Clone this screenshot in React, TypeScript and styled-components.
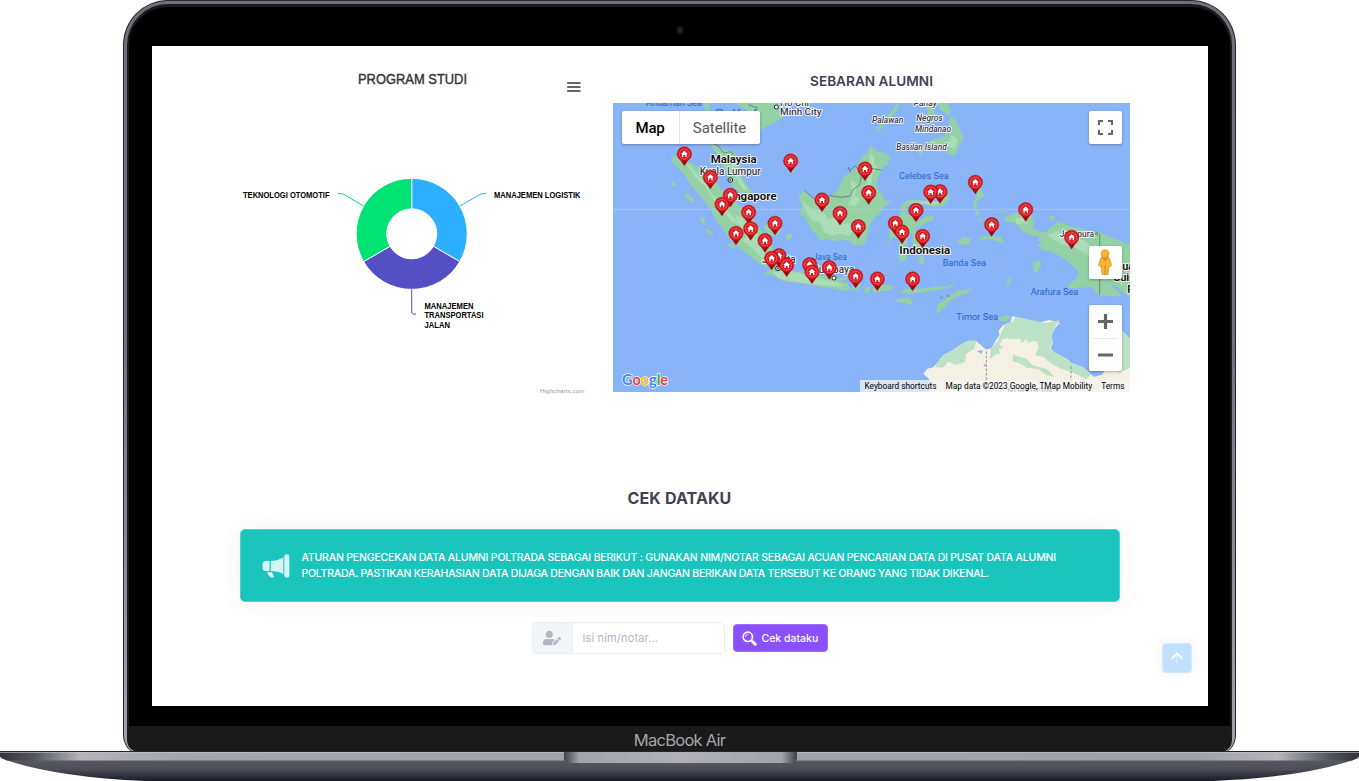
import React from "react";
import styled, { createGlobalStyle } from "styled-components";
import { FaUserEdit } from "react-icons/fa";

const Global = createGlobalStyle`
  * { box-sizing: border-box; }
  body { margin: 0; background: #fff; overflow: hidden; }
`;

const Page = styled.div`
  width: 1359px;
  height: 781px;
  display: flex;
  flex-direction: column;
  align-items: center;
  font-family: Inter, "Open Sans", sans-serif;
`;

const Lid = styled.div`
  width: 1113px;
  height: 752px;
  flex: none;
  padding: 1px 1px 0;
  background: #25262e;
  border-radius: 45px 45px 12px 12px / 45px 45px 18px 18px;
`;
const Rim = styled.div`
  height: 751px;
  padding: 3px 3px 0;
  border-radius: 44px 44px 12px 12px / 44px 44px 18px 18px;
  background: linear-gradient(#6f7079, #70717a 45%, #a2a3ab);
`;
const Bezel = styled.div`
  height: 748px;
  display: flex;
  flex-direction: column;
  align-items: center;
  background: #000;
  border: 2px solid #1b1b1d;
  border-bottom: 0;
  border-top-width: 3px;
  border-radius: 41px 41px 12px 12px;
  overflow: hidden;
`;
const CameraStrip = styled.div`
  height: 39px;
  flex: none;
  padding-top: 19px;
`;
const Camera = styled.div`
  width: 8px;
  height: 8px;
  border-radius: 50%;
  background: #2b2b2e;
  border: 2px solid #151517;
`;
const Screen = styled.main`
  width: 1056px;
  height: 660px;
  flex: none;
  background: #fff;
  overflow: hidden;
`;
const Chin = styled.div`
  width: 1104px;
  height: 26px;
  flex: none;
  margin-top: 20px;
  background: #1a1a1a;
  border-radius: 0 0 11px 11px;
  color: #a5a5a9;
  font: 400 16.5px/28px Inter, sans-serif;
  letter-spacing: -0.75px;
  text-align: center;
`;
const Base = styled.svg`
  width: 1359px;
  height: 30px;
  flex: none;
  display: block;
  margin-top: -1px;
`;

const Charts = styled.section`
  display: grid;
  grid-template-columns: 358px 517px;
  column-gap: 15px;
  padding: 24px 0 0 88px;
  height: 346px;
`;
const ChartSvg = styled.svg`
  width: 358px;
  height: 328px;
  display: block;
  font-family: "Liberation Sans", Arial, sans-serif;
`;
const MapColumn = styled.div`
  display: flex;
  flex-direction: column;
`;
const MapTitle = styled.h2`
  height: 33px;
  margin: 0;
  padding-left: 1px;
  color: #3f4254;
  font: 600 13.6px/23px Inter, sans-serif;
  text-align: center;
  letter-spacing: 0.02px;
`;
const MapBox = styled.div`
  position: relative;
  width: 517px;
  height: 289px;
  font-family: Roboto, Arial, sans-serif;
`;
const MapSvg = styled.svg`
  width: 517px;
  height: 289px;
  display: block;
`;
const MapTypes = styled.div`
  position: absolute;
  left: 9px;
  top: 8px;
  display: flex;
  height: 33px;
  background: #fff;
  border-radius: 2px;
  box-shadow: 0 1px 3px rgba(0, 0, 0, 0.3);
`;
const MapType = styled.button<{ $active?: boolean }>`
  width: ${(p) => (p.$active ? 57 : 81)}px;
  border: 0;
  border-left: ${(p) => (p.$active ? 0 : 1)}px solid #e4e4e4;
  padding: 0;
  background: none;
  color: ${(p) => (p.$active ? "#000" : "#565656")};
  font: ${(p) => (p.$active ? 500 : 400)} 15px/34px Roboto, sans-serif;
  letter-spacing: ${(p) => (p.$active ? -0.2 : -0.05)}px;
`;
const MapControl = styled.button<{ $top: number; $tall?: boolean }>`
  position: absolute;
  right: 8px;
  top: ${(p) => p.$top}px;
  width: 33px;
  height: ${(p) => (p.$tall ? 66 : 33)}px;
  padding: 0;
  border: 0;
  border-radius: 2px;
  background: #fff;
  box-shadow: 0 1px 3px rgba(0, 0, 0, 0.3);
  svg { display: block; }
`;
const Attribution = styled.div`
  position: absolute;
  right: 0;
  bottom: 0;
  width: 270px;
  height: 12px;
  display: flex;
  justify-content: space-between;
  padding: 0 5px 0 5px;
  background: rgba(245, 245, 245, 0.75);
  color: #000;
  font: 400 8.3px/13px Roboto, sans-serif;
  white-space: nowrap;
`;

const Check = styled.section`
  display: flex;
  flex-direction: column;
  align-items: center;
  padding-top: 95px;
`;
const CheckTitle = styled.h1`
  margin: 0 0 20px;
  color: #3f4254;
  font: 700 16px/22px Inter, sans-serif;
  letter-spacing: 0.12px;
`;
const Notice = styled.div`
  width: 880px;
  height: 73px;
  display: flex;
  align-items: center;
  gap: 12px;
  padding: 0 21px;
  color: #fff;
  background: #1bc5bd;
  border: 1px solid #4bd3cd;
  border-radius: 5px;
  box-shadow: 0 0 25px rgba(82, 63, 105, 0.07);
  > svg { flex: none; opacity: 0.82; }
`;
const NoticeText = styled.p`
  margin: 0;
  font: 500 10.5px/16px Inter, sans-serif;
  white-space: nowrap;
`;
const NoticeLine = styled.span<{ $spacing: number }>`
  display: block;
  letter-spacing: ${(p) => p.$spacing}px;
`;
const Form = styled.div`
  display: flex;
  align-items: center;
  gap: 8px;
  margin-top: 20px;
`;
const InputGroup = styled.div`
  display: flex;
  width: 193px;
  height: 32px;
  border: 1px solid #ebedf3;
  border-radius: 4px;
  overflow: hidden;
`;
const Addon = styled.span`
  width: 40px;
  flex: none;
  display: flex;
  align-items: center;
  justify-content: center;
  background: #f3f6f9;
  border-right: 1px solid #ebedf3;
  color: #b5b5c3;
`;
const Input = styled.input`
  min-width: 0;
  flex: 1;
  border: 0;
  padding: 0 10px;
  font: 400 11px Inter, sans-serif;
  letter-spacing: 0.15px;
  &::placeholder { color: #b5b5c3; }
`;
const Submit = styled.button`
  width: 95px;
  height: 28px;
  display: flex;
  align-items: center;
  gap: 5px;
  padding: 0 8px;
  border: 1px solid #9f6dff;
  border-radius: 4px;
  background: #8950fc;
  color: #fff;
  font: 500 10.5px Inter, sans-serif;
  letter-spacing: 0;
  white-space: nowrap;
  svg { flex: none; }
`;
const ScrollRow = styled.div`
  display: flex;
  justify-content: flex-end;
  margin-top: -11px;
  padding-right: 16px;
`;
const ScrollTop = styled.button`
  width: 30px;
  height: 30px;
  padding: 0;
  border: 1px solid #d4e9ff;
  border-radius: 4px;
  background: #c1e0ff;
  box-shadow: 0 0 14px rgba(82, 63, 105, 0.07);
  svg { display: block; }
`;

const pins: [number, number][] = [
  [223, 162], [542, 183], [765, 207], [301, 232], [1096, 247], [990, 275], [962, 276], [776, 278],
  [361, 286], [636, 300], [336, 313], [1247, 329], [918, 331], [416, 337], [690, 340], [495, 370],
  [856, 370], [1145, 374], [745, 380], [422, 386], [876, 396], [378, 400], [938, 409], [1385, 412],
  [465, 422], [507, 467], [485, 475], [599, 494], [530, 495], [658, 503], [606, 516], [737, 529],
  [802, 537], [908, 537],
];

function Pin({ x, y }: { x: number; y: number }) {
  return (
    <g transform={`translate(${x} ${y})`}>
      <path d="M-17 11 L0 36 L17 11Z" fill="#9c0d12" />
      <circle r="21.5" fill="#d5151c" stroke="#b80d13" strokeWidth="1.5" />
      <circle r="15.5" fill="#dc1c22" stroke="#ee8083" strokeWidth="1.8" />
      <path d="M0 -10 L10 0 H7 V9 H3 V3 H-3 V9 H-7 V0 H-10Z" fill="#fff" />
    </g>
  );
}

type LabelProps = {
  x: number; y: number; w: number; size: number; kind?: "sea" | "isle" | "city" | "bold"; children: string;
};
function Label({ x, y, w, size, kind = "bold", children }: LabelProps) {
  const sea = kind === "sea";
  return (
    <text
      x={x} y={y} textLength={w} fontSize={size} lengthAdjust="spacingAndGlyphs"
      fontStyle={kind === "isle" ? "italic" : "normal"}
      fontWeight={kind === "bold" ? 700 : sea ? 400 : 500}
      fill={sea ? "#2563c9" : kind === "bold" ? "#151515" : "#3a3a4a"}
      stroke={sea ? "none" : "#fff"} strokeWidth={sea ? 0 : 5}
      strokeLinejoin="round" paintOrder="stroke"
    >
      {children}
    </text>
  );
}

function AlumniMap() {
  return (
    <MapSvg viewBox="9 9 1551 867">
      <rect x="9" y="9" width="1551" height="867" fill="#8ab4f8" />
      <g fill="#94d2a5">
        <path d="M182 172 L205 168 225 176 250 194 270 205 286 226 315 245 338 272 360 290 391 320 417 345 436 365 446 382 468 402 487 425 488 458 482 493 468 500 446 490 425 472 399 453 376 434 354 410 337 384 315 355 303 330 283 303 261 276 239 252 225 224 200 200 187 184Z" />
        <path d="M284 9 H295 L301 31 292 49 300 85 298 110 318 137 346 149 372 156 386 175 390 218 402 242 422 269 434 286 427 296 405 287 380 270 359 246 346 212 331 184 316 155 302 135 284 121 278 82 286 40Z" />
        <path d="M378 9 H505 L522 26 535 45 515 53 492 69 470 78 451 93 443 112 430 104 443 85 447 66 425 50 409 29 391 20Z" />
        <path d="M565 289 L583 271 603 292 634 303 660 291 684 270 700 230 718 220 740 201 754 174 774 157 780 136 798 154 823 159 844 171 830 182 840 192 820 198 807 226 798 259 813 278 824 301 845 305 823 318 812 340 796 352 782 369 774 399 764 431 734 438 720 423 697 420 671 424 651 417 631 420 618 404 599 381 589 356 570 345 575 318Z" />
        <path d="M870 351 L873 318 891 301 925 299 949 302 992 303 1008 290 1022 281 1016 301 1000 318 969 320 933 310 905 310 887 320 892 343 907 349 928 362 950 348 974 349 970 359 952 367 929 381 912 386 928 410 942 427 955 455 945 463 932 451 923 464 909 435 908 404 899 397 893 417 890 440 888 480 870 486 864 464 872 446 865 415 850 410 841 423 836 405 847 385 856 370Z" />
        <path d="M1100 294 L1100 276 1114 263 1117 277 1126 288 1115 294 1098 307 1101 326 1111 345 1100 347 1093 327 1090 305Z M1064 212 l5 -8 2 10 -5 1Z M1032 225l8 5-4 2Z M1107 355l14 7-2 5-12-6Z" />
        <path d="M800 90 L813 66 831 48 850 26 860 9 867 14 861 31 846 49 827 70 814 88Z M981 9 H1011 L1024 31 1014 48 1001 33 991 30Z M1020 47 L1039 63 1049 89 1059 105 1060 119 1053 125 1045 144 1036 165 1020 166 1007 157 1020 142 1001 131 983 145 958 151 934 150 946 135 964 119 991 115 1009 101 1030 93 1018 77Z M953 9 H978 L968 23 979 52 962 75 952 55Z M925 153l15 4-13 7Z M900 182l12-4-5 8Z" />
        <path d="M1160 333 L1193 332 1190 337 1169 338Z M1179 354 L1208 341 1229 338 1260 343 1271 360 1269 384 1290 395 1307 397 1320 383 1340 370 1362 371 1390 381 1433 391 1468 398 1506 414 1560 435 V590 L1541 579 1519 559 1501 551 1524 574 1535 588 1502 588 1466 586 1443 561 1412 563 1377 565 1375 551 1393 542 1408 520 1390 499 1364 476 1334 460 1297 449 1280 434 1298 429 1285 420 1287 408 1261 405 1236 392 1216 368 1190 366Z" />
        <path d="M1102 421 L1121 407 1148 409 1175 412 1183 432 1161 423 1128 417Z M1044 423l19-13 20 8-6 13-25 5Z M1269 488l21-7 3 18-12 20-10-5Z M1190 545l12-14 3 5-8 20-8-1Z M1312 345l20 4 2 10-12 2Z M1340 365l17 2-5 8-12-2Z" />
        <path d="M462 521 L481 508 482 490 493 505 516 510 560 513 610 526 669 526 685 542 714 550 720 573 680 568 638 562 603 554 560 548 517 544 500 529Z M727 562l23-10 4 7-17 13-13-3Z M674 536l31-4 8 6-31 6Z M763 567l13-9 7 4-7 17-13-1Z M786 571l13-13 38-4 17 8-22 12-17-2-26 7Z M870 578l19-13 38 2 45-6 30-3-3 10-59 7-38 6Z M1003 560l27-7-4 8-21 5Z M852 600l43-9 15 16-7 9-22-8-25-5Z M978 640l6-27 35-25 26-17 38-5-10 12-29 10-24 16-22 23-18 14Z" />
        <path d="M460 382l18-20 17 8 20 13-6 16-12 8-23-6Z M528 407l14-8 4 14-10 8-9-6Z M180 248l14-1 4 13-12-3Z M220 287l14-9 21 26-10 4Z M270 351l12 2 4 22-10-4Z M282 383l18 8 10 15-13-2Z M343 430l25 2 11 15-13-3Z M542 205l10 7-4 14Z M830 425l8 2-2 12Z M927 470l10-3 7 20-7 8-8-4Z" />
      </g>
      <g fill="#b0dfbc" opacity=".8">
        <path d="M225 190l15 6 20 25 25 24 15 28 35 42 35 34 15 22-18-4-23-27-31-36-26-42-32-30-19-31Z" />
        <path d="M374 344l23 9 24 32 33 31 17 43-14 18-24-28-31-24-18-20 21 11 7-16-24-21Z" />
        <path d="M576 305l31 20 29 5 18 27 28-6 7 24 26-6 19 14-16 26-28-8-25 7-22-12-14-29-22-6-18-26Z" />
        <path d="M782 160l12 10-2 25 11 5-16 22-4 35-15 25-15-12 19-23-5-22-15-8 22-14Z M722 239l18 12-5 35 17 14-17 20-21-6 15-27Z" />
        <path d="M353 162l24 14-3 35 23 32 17 33-15-8-21-33-13-21-2-30Z M1022 103l21 13-9 31-26-10 12-16Z" />
        <path d="M1215 354l32 1 6 15-33 2Z M1308 405l38-12 27 24 47 2 36 33 40 14 40 2v89l-27-28-38-15-17-34-28-20-40-22-28-3Z M897 305l70-3 31 4-26 8-65-6Z M488 517l30-3 53 5 40 13 70 14 22 13-22 1-77-7-64-10-38-10Z" />
      </g>
      <path d="M940 822 L952 806 969 802 985 785 1000 765 1024 753 1050 736 1072 724 1098 723 1113 736 1128 749 1144 745 1158 721 1169 704 1165 693 1180 675 1201 667 1207 648 1230 654 1264 662 1290 667 1318 660 1350 669 1333 686 1324 711 1329 728 1322 745 1334 759 1371 777 1394 799 1426 807 1451 830 1477 824 1489 800 1514 746 1532 690 1544 700 1547 733 1560 744 V876 H958 L968 853 955 835Z" fill="#f5f0e4" />
      <g fill="#bbe2c6">
        <path d="M976 802l12-25 18-15 27-12 24-20 23-9 20 1-8 25-24 15-3 23-27 10-24-10-15 18Z" />
        <path d="M1142 747l22-25 10-26 12-23 22-8 9-15 46 10 44 9 43-9-19 26-7 27 5 15-11 16 14 12 23 12 29 20 36 14 23 22-15 13-38-19-40-13-30-17-21-18-24-4 10-22-3-18-15-3-14 7-2-13-17 12-3-12-24 1-16-3-15 4-7 16 12 9-15 2 5 15-17 5-15 12Z M1210 764l38 12 20 20 42 11 23 23-25-5-24-19-32-2-20-13-24-8Z M1492 805l29-60 15-54 24 24v89l-31 13-22-10Z" />
      </g>
      <path d="M1100 753l19-2-4 10Z M1120 799l6-10 2 10Z M1336 722l9 1 2 14-9-1Z" fill="#8ab4f8" />
      <path d="M1164 655l23-9 16 2-12 15-18 1Z" fill="#94d2a5" />
      <g fill="none" stroke="#5f7468" strokeWidth="2.3">
        <path d="M583 271 L620 303 642 307 660 286 690 292 718 289 731 267 748 255 754 232 747 212 735 197 721 211 714 201 722 217M782 205l33 5M306 130l19 8 17 22 18-5 12 8M1469 402v183M415 14l29 10M990 590l8 5M1010 587l10 2" />
        <path d="M1129 754V876M1383 800V876" stroke="#777" strokeDasharray="8 5" />
      </g>
      <path d="M9 328H1560" stroke="#a9c7fa" strokeWidth="2.5" />
      <Label x={108} y={18} w={168} size={26} kind="sea">Andaman Sea</Label>
      <Label x={313} y={48} w={130} size={26} kind="sea">Gulf of</Label>
      <Label x={510} y={18} w={87} size={28} kind="city">Ho Chi</Label>
      <Label x={510} y={46} w={125} size={29} kind="city">Minh City</Label>
      <Label x={302} y={188} w={138} size={34}>Malaysia</Label>
      <Label x={269} y={224} w={183} size={30} kind="city">Kuala Lumpur</Label>
      <Label x={342} y={300} w={158} size={34}>Singapore</Label>
      <Label x={911} y={17} w={70} size={25} kind="isle">Panay</Label>
      <Label x={786} y={69} w={94} size={26} kind="isle">Palawan</Label>
      <Label x={919} y={62} w={79} size={26} kind="isle">Negros</Label>
      <Label x={915} y={96} w={108} size={26} kind="isle">Mindanao</Label>
      <Label x={859} y={151} w={151} size={26} kind="isle">Basilan Island</Label>
      <Label x={867} y={236} w={149} size={28} kind="sea">Celebes Sea</Label>
      <Label x={1349} y={410} w={103} size={26} kind="city">Jayapura</Label>
      <Label x={868} y={462} w={153} size={34}>Indonesia</Label>
      <Label x={608} y={480} w={103} size={28} kind="sea">Java Sea</Label>
      <Label x={456} y={490} w={101} size={30} kind="city">Jakarta</Label>
      <Label x={608} y={520} w={125} size={30} kind="city">Surabaya</Label>
      <Label x={998} y={498} w={130} size={28} kind="sea">Banda Sea</Label>
      <Label x={1262} y={584} w={143} size={28} kind="sea">Arafura Sea</Label>
      <Label x={1039} y={659} w={125} size={28} kind="sea">Timor Sea</Label>
      <Label x={1480} y={511} w={92} size={34}>Papua</Label>
      <Label x={1508} y={543} w={104} size={34}>Guinea</Label>
      <Label x={1552} y={578} w={60} size={30}>Port</Label>
      <Label x={1192} y={880} w={135} size={22} kind="city">NORTHERN</Label>
      <g fill="#fff" stroke="#222" strokeWidth="3">
        <circle cx="499" cy="21" r="6" />
        <circle cx="361" cy="240" r="7" /><circle cx="361" cy="240" r="2" />
        <circle cx="504" cy="505" r="7" /><circle cx="504" cy="505" r="2" />
        <circle cx="672" cy="534" r="6" /><circle cx="1460" cy="401" r="3" strokeWidth="2" />
      </g>
      {pins.map(([x, y]) => <Pin key={`${x}-${y}`} x={x} y={y} />)}
      <text x="36" y="855" fontSize="46" fontWeight="700" textLength="138" lengthAdjust="spacingAndGlyphs" fontFamily="Lato, sans-serif" stroke="#fff" strokeWidth="4" paintOrder="stroke">
        <tspan fill="#4285f4">G</tspan><tspan fill="#ea4335">o</tspan><tspan fill="#fbbc05">o</tspan><tspan fill="#4285f4">g</tspan><tspan fill="#34a853">l</tspan><tspan fill="#ea4335">e</tspan>
      </text>
    </MapSvg>
  );
}

function ProgramChart() {
  return (
    <ChartSvg viewBox="240 70 358 328">
      <text x="358" y="84" fontSize="14.4" fill="#333" stroke="#333" strokeWidth=".4" textLength="109" lengthAdjust="spacingAndGlyphs">PROGRAM STUDI</text>
      <path d="M568 83H579.7M568 87H579.7M568 91H579.7" stroke="#666" strokeWidth="2.2" strokeLinecap="round" />
      <g stroke="#fff" strokeLinejoin="round">
        <path d="M411.7 178.3 A55.5 55.5 0 0 1 459.8 261.6 L433.4 246.3 A25 25 0 0 0 411.7 208.8Z" fill="#2caffe" />
        <path d="M459.8 261.6 A55.5 55.5 0 0 1 363.6 261.6 L390 246.3 A25 25 0 0 0 433.4 246.3Z" fill="#544fc5" />
        <path d="M363.6 261.6 A55.5 55.5 0 0 1 411.7 178.3 L411.7 208.8 A25 25 0 0 0 390 246.3Z" fill="#00e272" />
      </g>
      <g fill="none" strokeWidth="1">
        <path d="M460 206 L480 194.5 Q482 193.5 486 193.5" stroke="#2caffe" />
        <path d="M363.5 206 L344 194.5 Q342 193.5 338 193.5" stroke="#00e272" />
        <path d="M411.7 289.5 V313 Q411.7 314.2 416 314.2" stroke="#544fc5" />
      </g>
      <g fontSize="8.6" fontWeight="700" fill="#000">
        <text x="243" y="198" textLength="86.5" lengthAdjust="spacingAndGlyphs">TEKNOLOGI OTOMOTIF</text>
        <text x="494" y="198" textLength="86.5" lengthAdjust="spacingAndGlyphs">MANAJEMEN LOGISTIK</text>
        <text x="424.5" y="309" textLength="49" lengthAdjust="spacingAndGlyphs">MANAJEMEN</text>
        <text x="424.5" y="318" textLength="59" lengthAdjust="spacingAndGlyphs">TRANSPORTASI</text>
        <text x="424.5" y="328" textLength="25.5" lengthAdjust="spacingAndGlyphs">JALAN</text>
      </g>
      <text x="540" y="393" fontSize="6.2" fill="#999" textLength="44.5">Highcharts.com</text>
    </ChartSvg>
  );
}

function Megaphone() {
  return (
    <svg width="28" height="24" viewBox="0 0 28 24" fill="#fff">
      <path d="M4 7H7.5V17H4Q.5 17 .5 13.5V10.5Q.5 7 4 7Z" />
      <path d="M8.8 7Q16 7 21.3 3.3V20Q16 17 8.8 17Z" />
      <rect x="22.3" y="0.3" width="5" height="23.4" rx="2.4" />
      <path d="M5 18.3H10Q10.5 20.5 12 22Q12 23.7 10 23.7Q7.5 23.7 5 18.3Z" />
    </svg>
  );
}

function Pegman() {
  return (
    <svg width="33" height="33" viewBox="0 0 33 33">
      <path d="M12 11.5 Q16 9.5 20 11.5 L22.5 19 21.5 20.5 20 20 19 28.5 H13 L12.3 20 11 20.5 9.5 19Z" fill="#fbb52a" stroke="#b98230" strokeWidth=".6" />
      <circle cx="16" cy="7.8" r="4" fill="#fbb52a" stroke="#b98230" strokeWidth=".5" />
      <path d="M13.5 12.3H18.5L16 15.5Z" fill="#ee7c24" />
      <path d="M16 20V28" stroke="#b98230" strokeWidth=".8" />
    </svg>
  );
}

function LaptopBase() {
  return (
    <Base viewBox="0 751 1359 30">
      <defs>
        <linearGradient id="strip">
          <stop offset="0" stopColor="#33343b" /><stop offset=".025" stopColor="#55565d" /><stop offset=".06" stopColor="#b5b5ba" />
          <stop offset=".13" stopColor="#a4a4ac" /><stop offset=".88" stopColor="#a0a0a8" /><stop offset=".94" stopColor="#b5b5ba" />
          <stop offset=".98" stopColor="#505158" /><stop offset="1" stopColor="#303138" />
        </linearGradient>
        <linearGradient id="body" x2="0" y2="1">
          <stop offset="0" stopColor="#5c5d66" /><stop offset=".5" stopColor="#4c4d57" /><stop offset="1" stopColor="#191a27" />
        </linearGradient>
        <linearGradient id="notch">
          <stop offset="0" stopColor="#404149" /><stop offset=".065" stopColor="#a3a3ab" /><stop offset=".5" stopColor="#b0b0b6" />
          <stop offset=".935" stopColor="#a3a3ab" /><stop offset="1" stopColor="#404149" />
        </linearGradient>
      </defs>
      <path d="M0 758 Q52 777 145 781 H1214 Q1307 777 1359 758Z" fill="url(#body)" />
      <path d="M0 752H1359V757L1352 760.5H7L0 757Z" fill="url(#strip)" />
      <path d="M0 751.5H1359" stroke="#25262b" />
      <path d="M0 752.5H1359" stroke="#c5c5ca" strokeWidth=".6" />
      <path d="M564 752H797V759Q796 763 789 763H572Q565 763 564 759Z" fill="url(#notch)" />
    </Base>
  );
}

export default function App() {
  return (
    <>
      <Global />
      <Page>
        <Lid>
          <Rim>
            <Bezel>
              <CameraStrip><Camera /></CameraStrip>
              <Screen>
                <Charts>
                  <ProgramChart />
                  <MapColumn>
                    <MapTitle>SEBARAN ALUMNI</MapTitle>
                    <MapBox>
                      <AlumniMap />
                      <MapTypes>
                        <MapType $active>Map</MapType>
                        <MapType>Satellite</MapType>
                      </MapTypes>
                      <MapControl $top={8} aria-label="Fullscreen">
                        <svg width="33" height="33"><path d="M10 14V10H14M19 10H23V14M23 19V23H19M14 23H10V19" fill="none" stroke="#666" strokeWidth="2" /></svg>
                      </MapControl>
                      <MapControl $top={143} aria-label="Street View"><Pegman /></MapControl>
                      <MapControl $top={202} $tall aria-label="Zoom">
                        <svg width="33" height="66"><path d="M9 16.5H24M16.5 9V24M9 50H24" stroke="#666" strokeWidth="3.2" /><path d="M4 33.5H29" stroke="#e6e6e6" /></svg>
                      </MapControl>
                      <Attribution>
                        <span>Keyboard shortcuts</span>
                        <span>Map data ©2023 Google, TMap Mobility</span>
                        <span>Terms</span>
                      </Attribution>
                    </MapBox>
                  </MapColumn>
                </Charts>
                <Check>
                  <CheckTitle>CEK DATAKU</CheckTitle>
                  <Notice>
                    <Megaphone />
                    <NoticeText>
                      <NoticeLine $spacing={-0.19}>ATURAN PENGECEKAN DATA ALUMNI POLTRADA SEBAGAI BERIKUT : GUNAKAN NIM/NOTAR SEBAGAI ACUAN PENCARIAN DATA DI PUSAT DATA ALUMNI</NoticeLine>
                      <NoticeLine $spacing={-0.23}>POLTRADA. PASTIKAN KERAHASIAN DATA DIJAGA DENGAN BAIK DAN JANGAN BERIKAN DATA TERSEBUT KE ORANG YANG TIDAK DIKENAL.</NoticeLine>
                    </NoticeText>
                  </Notice>
                  <Form>
                    <InputGroup>
                      <Addon><FaUserEdit size={18} /></Addon>
                      <Input placeholder="Isi nim/notar..." />
                    </InputGroup>
                    <Submit>
                      <svg width="15" height="15" viewBox="0 0 15 15" fill="none" stroke="#fff">
                        <circle cx="5.8" cy="5.8" r="4.7" strokeWidth="1.7" />
                        <path d="M3.4 6Q3.5 3.5 6 3.3" strokeWidth=".8" />
                        <path d="M9.2 9.2L10.5 10.5" strokeWidth="1.6" />
                        <path d="M10.8 10.8L13.2 13.2" strokeWidth="3" strokeLinecap="round" />
                      </svg>
                      Cek dataku
                    </Submit>
                  </Form>
                </Check>
                <ScrollRow>
                  <ScrollTop aria-label="Scroll to top">
                    <svg width="28" height="28" fill="none" stroke="#fff" strokeLinecap="round">
                      <path d="M9 14.5L14 9.5L19 14.5" strokeWidth="1.7" />
                      <path d="M14 10V20" strokeWidth="1.3" opacity=".45" />
                    </svg>
                  </ScrollTop>
                </ScrollRow>
              </Screen>
              <Chin>MacBook Air</Chin>
            </Bezel>
          </Rim>
        </Lid>
        <LaptopBase />
      </Page>
    </>
  );
}
